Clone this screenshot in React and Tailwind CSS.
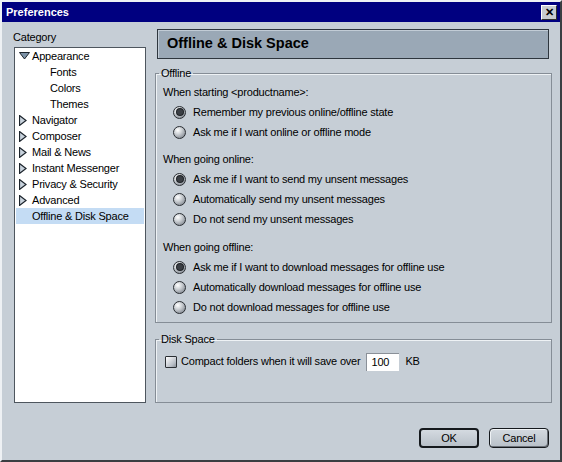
const font = { fontFamily: '"Liberation Sans", Arial, sans-serif' };

const categories = [
  { label: "Appearance", icon: "down" },
  { label: "Fonts", child: true },
  { label: "Colors", child: true },
  { label: "Themes", child: true },
  { label: "Navigator", icon: "right" },
  { label: "Composer", icon: "right" },
  { label: "Mail & News", icon: "right" },
  { label: "Instant Messenger", icon: "right" },
  { label: "Privacy & Security", icon: "right" },
  { label: "Advanced", icon: "right" },
  { label: "Offline & Disk Space", selected: true },
];

const Twisty = ({ dir }) =>
  dir === "down" ? (
    <svg width="11" height="8" viewBox="0 0 11 8">
      <polygon points="0.5,0.5 10.5,0.5 5.5,7" fill="#7d93a8" stroke="#1c242c" strokeWidth="1" />
    </svg>
  ) : (
    <svg width="8" height="11" viewBox="0 0 8 11">
      <polygon points="0.5,0.5 7,5.5 0.5,10.5" fill="#c8d2dc" stroke="#1c242c" strokeWidth="1.2" />
    </svg>
  );

const Radio = ({ checked }) => (
  <span className="w-[13px] h-[13px] rounded-full border border-[#2a2e33] bg-[radial-gradient(circle_at_35%_30%,#ffffff_0%,#d0d4d8_35%,#8a9098_80%,#5c6168_100%)] flex items-center justify-center shrink-0">
    {checked && <span className="w-[6px] h-[6px] rounded-full bg-[#3a3e44] ring-1 ring-[#1e2226]" />}
  </span>
);

const Option = ({ checked, children }) => (
  <div className="h-[20px] flex items-center pl-[10px] gap-[7px]">
    <Radio checked={checked} />
    <span>{children}</span>
  </div>
);

const Label = ({ children }) => <div className="h-[20px] flex items-center">{children}</div>;

export default function App() {
  return (
    <div
      style={font}
      className="w-[562px] h-[462px] flex flex-col bg-[#c6ced6] text-black text-[11px] tracking-[-0.2px] border-2 border-t-[#eef1f4] border-l-[#eef1f4] border-r-[#3a3e42] border-b-[#3a3e42]"
    >
      {/* title bar */}
      <div className="h-[20px] bg-[#000080] flex items-center justify-between pl-[4px] pr-[3px]">
        <span className="text-white font-bold text-[11px] tracking-normal">Preferences</span>
        <span className="w-[16px] h-[15px] bg-[#c8ccd0] border border-t-white border-l-white border-r-[#303030] border-b-[#303030] flex items-center justify-center text-[11px] font-bold leading-none">
          ✕
        </span>
      </div>

      <div className="flex pl-[12px] gap-[9px]">
        {/* left: category tree */}
        <div className="w-[132px] pt-[8px]">
          <div className="h-[14px] leading-[14px] -ml-[1px]">Category</div>
          <div className="mt-[3px] h-[356px] bg-white border border-[#4e565e] px-[1px]">
            {categories.map((c) => (
              <div
                key={c.label}
                className={`h-[16px] flex items-center ${c.selected ? "bg-[#c4dcf4]" : ""} ${
                  c.child ? "pl-[34px]" : "pl-[16px]"
                }`}
              >
                {c.icon && (
                  <span className="-ml-[13px] w-[13px] flex items-center">
                    <Twisty dir={c.icon} />
                  </span>
                )}
                <span>{c.label}</span>
              </div>
            ))}
          </div>
        </div>

        {/* right: panel */}
        <div className="w-[397px] pt-[7px]">
          <div className="ml-[2px] w-[392px] h-[30px] bg-[#9aa8b6] border border-[#2e363e] shadow-[inset_1px_1px_0_#c2ccd6] flex items-center pl-[9px]">
            <span className="font-bold text-[14.5px] tracking-normal">Offline &amp; Disk Space</span>
          </div>

          <fieldset className="mt-[7px] border border-[#858d96] shadow-[inset_1px_1px_0_#eef2f5]">
            <legend className="ml-[3px] px-[2px] leading-[14px]">Offline</legend>
            <div className="px-[7px] pt-[2px] pb-[5px]">
              <Label>When starting &lt;productname&gt;:</Label>
              <Option checked>Remember my previous online/offline state</Option>
              <Option>Ask me if I want online or offline mode</Option>
              <div className="h-[7px]" />
              <Label>When going online:</Label>
              <Option checked>Ask me if I want to send my unsent messages</Option>
              <Option>Automatically send my unsent messages</Option>
              <Option>Do not send my unsent messages</Option>
              <div className="h-[8px]" />
              <Label>When going offline:</Label>
              <Option checked>Ask me if I want to download messages for offline use</Option>
              <Option>Automatically download messages for offline use</Option>
              <Option>Do not download messages for offline use</Option>
            </div>
          </fieldset>

          <fieldset className="mt-[9px] h-[71px] border border-[#858d96] shadow-[inset_1px_1px_0_#eef2f5]">
            <legend className="ml-[3px] px-[2px] leading-[14px]">Disk Space</legend>
            <div className="pl-[9px] pt-[8px] h-[23px] flex items-center">
              <span className="w-[12px] h-[12px] border border-[#2a2e33] rounded-[1px] bg-[linear-gradient(135deg,#ffffff,#b8bec6_70%,#8a9098)] shrink-0" />
              <span className="ml-[4px]">Compact folders when it will save over</span>
              <span className="ml-[6px] w-[33px] h-[18px] bg-white border-t border-l border-[#8a9098] flex items-center pl-[4px]">
                100
              </span>
              <span className="ml-[6px]">KB</span>
            </div>
          </fieldset>
        </div>
      </div>

      {/* buttons */}
      <div className="mt-[25px] flex justify-end gap-[10px] pr-[11px]">
        <button className="w-[60px] h-[20px] rounded-[4px] border-2 border-[#15191d] bg-[linear-gradient(#d4dae0,#b8c0c8)] text-[11px]">
          OK
        </button>
        <button className="w-[60px] h-[20px] rounded-[4px] border border-[#15191d] shadow-[inset_-1px_-1px_0_#6a7078,inset_1px_1px_0_#eef2f5] bg-[linear-gradient(#d4dae0,#b8c0c8)] text-[11px]">
          Cancel
        </button>
      </div>
    </div>
  );
}
